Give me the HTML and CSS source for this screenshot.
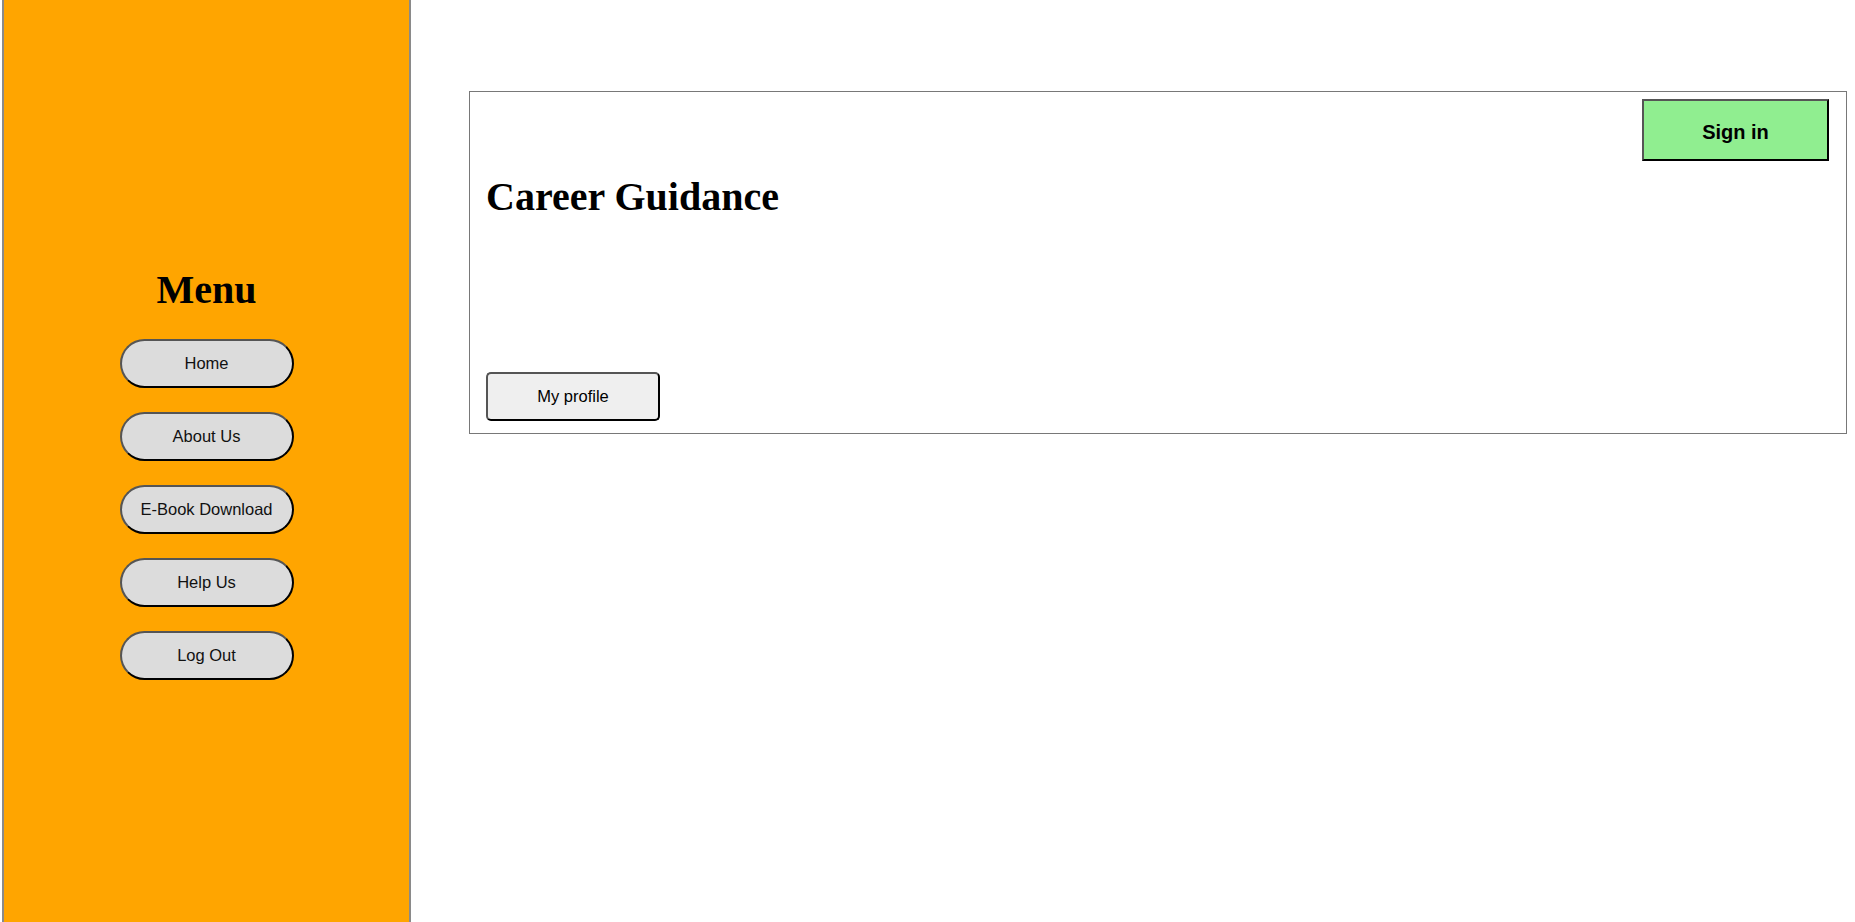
FILE: index.html
```html
<!DOCTYPE html>
<html>
<head>
<meta charset="utf-8">
<title>Career Guidance</title>
<link rel="stylesheet" href="styles.css">
</head>
<body>
<div class="page">
  <aside class="sidebar">
    <h2 class="menu-title">Menu</h2>
    <nav class="menu">
      <button class="menu-btn">Home</button>
      <button class="menu-btn">About Us</button>
      <button class="menu-btn">E-Book Download</button>
      <button class="menu-btn">Help Us</button>
      <button class="menu-btn">Log Out</button>
    </nav>
  </aside>
  <main class="main">
    <section class="card">
      <button class="signin">Sign in</button>
      <h1 class="title">Career Guidance</h1>
      <button class="profile">My profile</button>
    </section>
  </main>
</div>
</body>
</html>
```
FILE: styles.css
```css
html, body {
  margin: 0;
  padding: 0;
  background: #fff;
  height: 100%;
  overflow: hidden;
}

.page {
  display: flex;
  height: 100%;
}

.sidebar {
  box-sizing: border-box;
  width: 409px;
  margin-left: 2px;
  height: 100%;
  background: #ffa500;
  border-left: 2px solid #8a8a8a;
  border-right: 2px solid #8a8a8a;
  display: flex;
  flex-direction: column;
  align-items: center;
  padding-top: 267px;
}

.menu-title {
  font-family: "Liberation Serif", "Times New Roman", serif;
  font-weight: bold;
  font-size: 40px;
  line-height: 46px;
  margin: 0 0 26px;
  color: #000;
}

.menu {
  display: flex;
  flex-direction: column;
  gap: 24px;
}

.menu-btn {
  box-sizing: border-box;
  width: 174px;
  height: 49px;
  border-radius: 25px;
  background: #dcdcdc;
  border: 2px solid;
  border-color: #555 #000 #000 #555;
  font-family: "Liberation Sans", Arial, sans-serif;
  font-size: 16.5px;
  color: #111;
  padding: 0;
}

.main {
  flex: 1;
  padding: 91px 8px 0 58px;
}

.card {
  box-sizing: border-box;
  border: 1px solid #787878;
  height: 343px;
  padding: 7px 17px 0 16px;
  display: flex;
  flex-direction: column;
  align-items: flex-start;
}

.signin {
  align-self: flex-end;
  box-sizing: border-box;
  width: 187px;
  height: 62px;
  background: #90ee90;
  border: 2px solid;
  border-color: #555 #000 #000 #555;
  font-family: "Liberation Sans", Arial, sans-serif;
  font-weight: bold;
  font-size: 20px;
  color: #000;
  padding: 4px 0 0;
}

.title {
  font-family: "Liberation Serif", "Times New Roman", serif;
  font-weight: bold;
  font-size: 40px;
  line-height: 46px;
  margin: 13px 0 0;
  color: #000;
}

.profile {
  margin-top: auto;
  margin-bottom: 12px;
  box-sizing: border-box;
  width: 174px;
  height: 49px;
  border-radius: 5px;
  background: #efefef;
  border: 2px solid;
  border-color: #555 #000 #000 #555;
  font-family: "Liberation Sans", Arial, sans-serif;
  font-size: 16.5px;
  color: #000;
  padding: 0;
}
```
